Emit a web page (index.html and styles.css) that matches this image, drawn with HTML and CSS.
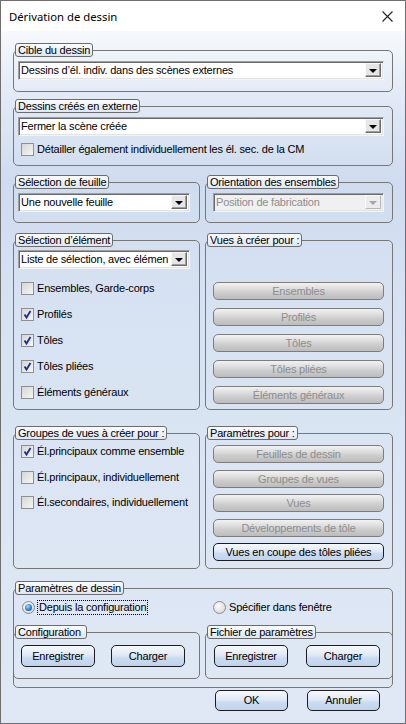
FILE: index.html
```html
<!DOCTYPE html>
<html lang="fr">
<head>
<meta charset="utf-8">
<title>Dérivation de dessin</title>
<link rel="stylesheet" href="styles.css">
</head>
<body>
<div class="window">
  <div class="titlebar">
    <span class="title">Dérivation de dessin</span>
    <svg class="close" width="11" height="11" viewBox="0 0 11 11"><path d="M0.5 0.5 L10.5 10.5 M10.5 0.5 L0.5 10.5" stroke="#222" stroke-width="1.1" fill="none"/></svg>
  </div>
  <div class="content">
    <fieldset class="grp g1">
      <legend>Cible du dessin</legend>
      <div class="body b1">
        <div class="combo"><span class="val">Dessins d’él. indiv. dans des scènes externes</span><span class="drop"><i></i></span></div>
      </div>
    </fieldset>

    <fieldset class="grp g2">
      <legend>Dessins créés en externe</legend>
      <div class="body b2">
        <div class="combo"><span class="val">Fermer la scène créée</span><span class="drop"><i></i></span></div>
        <label class="chk first"><span class="box"></span>Détailler également individuellement les él. sec. de la CM</label>
      </div>
    </fieldset>

    <div class="cols rowA">
      <fieldset class="grp">
        <legend>Sélection de feuille</legend>
        <div class="body bl">
          <div class="combo"><span class="val">Une nouvelle feuille</span><span class="drop"><i></i></span></div>
        </div>
      </fieldset>
      <fieldset class="grp">
        <legend>Orientation des ensembles</legend>
        <div class="body br">
          <div class="combo disabled"><span class="val">Position de fabrication</span><span class="drop"><i></i></span></div>
        </div>
      </fieldset>
    </div>

    <div class="cols rowB">
      <fieldset class="grp">
        <legend>Sélection d’élément</legend>
        <div class="body bl">
          <div class="combo"><span class="val">Liste de sélection, avec élémen</span><span class="drop"><i></i></span></div>
          <div class="checks c26">
            <label class="chk"><span class="box"></span>Ensembles, Garde-corps</label>
            <label class="chk"><span class="box on"><svg viewBox="0 0 11 11"><path d="M2.5 5.5 L4.5 8.5 L8.5 2" stroke="#1b2d94" stroke-width="1.8" fill="none"/></svg></span>Profilés</label>
            <label class="chk"><span class="box on"><svg viewBox="0 0 11 11"><path d="M2.5 5.5 L4.5 8.5 L8.5 2" stroke="#1b2d94" stroke-width="1.8" fill="none"/></svg></span>Tôles</label>
            <label class="chk"><span class="box on"><svg viewBox="0 0 11 11"><path d="M2.5 5.5 L4.5 8.5 L8.5 2" stroke="#1b2d94" stroke-width="1.8" fill="none"/></svg></span>Tôles pliées</label>
            <label class="chk"><span class="box"></span>Éléments généraux</label>
          </div>
        </div>
      </fieldset>
      <fieldset class="grp">
        <legend>Vues à créer pour :</legend>
        <div class="body br btns vues">
          <button class="btn dis">Ensembles</button>
          <button class="btn dis">Profilés</button>
          <button class="btn dis">Tôles</button>
          <button class="btn dis">Tôles pliées</button>
          <button class="btn dis">Éléments généraux</button>
        </div>
      </fieldset>
    </div>

    <div class="cols rowC">
      <fieldset class="grp">
        <legend>Groupes de vues à créer pour :</legend>
        <div class="body bl">
          <div class="checks c25">
            <label class="chk"><span class="box on"><svg viewBox="0 0 11 11"><path d="M2.5 5.5 L4.5 8.5 L8.5 2" stroke="#1b2d94" stroke-width="1.8" fill="none"/></svg></span>Él.principaux comme ensemble</label>
            <label class="chk"><span class="box"></span>Él.principaux, individuellement</label>
            <label class="chk"><span class="box"></span>Él.secondaires, individuellement</label>
          </div>
        </div>
      </fieldset>
      <fieldset class="grp">
        <legend>Paramètres pour :</legend>
        <div class="body br btns params-btns">
          <button class="btn dis">Feuilles de dessin</button>
          <button class="btn dis">Groupes de vues</button>
          <button class="btn dis">Vues</button>
          <button class="btn dis">Développements de tôle</button>
          <button class="btn">Vues en coupe des tôles pliées</button>
        </div>
      </fieldset>
    </div>

    <fieldset class="grp gparams">
      <legend>Paramètres de dessin</legend>
      <div class="radios">
        <label class="rad"><span class="dot on"></span><span class="focus">Depuis la configuration</span></label>
        <label class="rad r2"><span class="dot"></span><span>Spécifier dans fenêtre</span></label>
      </div>
      <div class="cols sub">
        <fieldset class="grp">
          <legend>Configuration&nbsp;</legend>
          <div class="body pair pl">
            <button class="btn big">Enregistrer</button>
            <button class="btn big">Charger</button>
          </div>
        </fieldset>
        <fieldset class="grp">
          <legend>Fichier de paramètres</legend>
          <div class="body pair pr">
            <button class="btn big">Enregistrer</button>
            <button class="btn big">Charger</button>
          </div>
        </fieldset>
      </div>
    </fieldset>

    <div class="footer">
      <button class="btn big">OK</button>
      <button class="btn big">Annuler</button>
    </div>
  </div>
</div>
</body>
</html>
```

FILE: styles.css
```css
* { box-sizing: border-box; }
html, body { margin: 0; padding: 0; }
body {
  width: 406px;
  height: 724px;
  font-family: "Liberation Sans", Arial, sans-serif;
  font-size: 11px;
  letter-spacing: -0.2px;
  color: #000;
  background: #fff;
  overflow: hidden;
}
.window {
  width: 406px;
  height: 724px;
  border: 1px solid #6f6f6f;
  display: flex;
  flex-direction: column;
}
.titlebar {
  height: 30px;
  flex: none;
  background: #fff;
  display: flex;
  align-items: center;
  justify-content: space-between;
  padding: 0 12px 0 8px;
}
.title {
  font-family: "Noto Sans", "Open Sans", sans-serif;
  font-size: 11.3px;
  letter-spacing: 0;
  color: #000;
}
.close { display: block; }
.content {
  flex: 1;
  padding: 12px 12px 0 12px;
  background: linear-gradient(#f6f9fd 0px, #e3ebf6 60px, #cfdcef 150px, #d6e2f2 260px, #dbe5f3 450px, #e0e8f5 693px);
}

/* group boxes */
.grp {
  margin: 0;
  padding: 0;
  min-width: 0;
  border: 1px solid #777;
  border-radius: 5px;
}
.grp > legend {
  margin-left: 1px;
  padding: 0 2px;
  height: 14px;
  line-height: 12px;
  border: 1px solid #6c6c6c;
  border-radius: 3px;
  background: linear-gradient(#fbfcfe, #dde7f4);
  white-space: nowrap;
}
.body { display: flex; flex-direction: column; }
.b1 { padding: 4px 8px 11px 4px; }
.g2 { margin-top: 7px; }
.b2 { padding: 4px 8px 9px 4px; }

.cols {
  display: grid;
  grid-template-columns: 187px 188px;
  column-gap: 5px;
  align-items: stretch;
}
.rowA { margin-top: 9px; }
.rowB { margin-top: 10px; }
.rowC { margin-top: 16px; }
.rowA .bl { padding: 4px 9px 10px 4px; }
.rowA .br { padding: 4px 8px 10px 7px; }
.rowB .bl { padding: 3px 9px 10px 4px; }
.rowC .bl { padding: 5px 9px 10px 4px; }
.btns { padding-left: 7px; padding-right: 8px; }
.vues { padding-top: 35px; padding-bottom: 5px; gap: 8px; }
.params-btns { padding-top: 5px; padding-bottom: 7px; gap: 6.5px; }

/* combo box */
.combo {
  height: 19px;
  display: flex;
  align-items: stretch;
  background: #fff;
  border: 1px solid;
  border-color: #a0a0a0 #f4f4f4 #f4f4f4 #a0a0a0;
  box-shadow: inset 1px 1px 0 #696969, inset -1px -1px 0 #e3e3e3;
  padding: 1px 2px 2px 1px;
}
.combo .val {
  flex: 1;
  min-width: 0;
  overflow: hidden;
  white-space: nowrap;
  line-height: 15px;
  padding-left: 1px;
}
.combo .drop {
  flex: none;
  width: 16px;
  background: #e6e6e6;
  border: 1px solid;
  border-color: #f8f8f8 #6a6a6a #6a6a6a #f8f8f8;
  box-shadow: inset -1px -1px 0 #a0a0a0;
  display: flex;
  align-items: center;
  justify-content: center;
}
.combo .drop i {
  display: block;
  width: 0; height: 0;
  border-left: 4px solid transparent;
  border-right: 4px solid transparent;
  border-top: 4px solid #000;
  margin-top: 1px;
}
.combo.disabled { background: #f0f0f0; color: #8d8d8d; }
.combo.disabled .drop { background: #ececec; border-color: #fafafa #b8b8b8 #b8b8b8 #fafafa; box-shadow: none; }
.combo.disabled .drop i { border-top-color: #a6a6a6; }

/* checkboxes */
.chk {
  display: flex;
  align-items: center;
  height: 13px;
  line-height: 13px;
  white-space: nowrap;
}
.chk .box {
  flex: none;
  width: 13px;
  height: 13px;
  margin: 0 3px 0 3px;
  border: 1px solid #8f8f8f;
  background: linear-gradient(135deg, #d6d6d6, #f6f6f6);
  display: flex;
  align-items: center;
  justify-content: center;
}
.chk .box svg { width: 11px; height: 11px; display: block; }
.chk.first { margin-top: 7px; }
.checks { display: flex; flex-direction: column; }
.c26 { margin-top: 13px; gap: 13px; }
.c25 { gap: 12.5px; }

/* buttons */
.btn {
  font-family: "Liberation Sans", Arial, sans-serif;
  font-size: 11px;
  letter-spacing: -0.2px;
  color: #000;
  height: 18px;
  padding: 0;
  border: 1px solid #1d1d1d;
  border-radius: 5px;
  background: linear-gradient(#f6f9fd, #e0e9f6 45%, #cbdcf1 60%, #bfd3ee);
  line-height: 16px;
  text-align: center;
  white-space: nowrap;
}
.btn.dis {
  color: #8d8d8d;
  border-color: #7d7d7d;
  background: linear-gradient(#f2f2f2, #dedede 35%, #cdcdcd 60%, #bcbcbc);
}
.btn.big { height: 22px; width: 74px; line-height: 20px; }

/* parameters */
.gparams { margin-top: 12px; padding-bottom: 8px; }
.radios {
  display: grid;
  grid-template-columns: 190px 170px;
  margin-top: 5px;
  padding-left: 8px;
}
.rad { display: flex; align-items: center; height: 14px; white-space: nowrap; }
.rad .dot {
  flex: none;
  width: 13px; height: 13px;
  border-radius: 50%;
  border: 1px solid #8c8c8c;
  background: radial-gradient(circle at 40% 35%, #fdfdfd, #cfcfcf);
  margin-right: 3px;
  display: flex; align-items: center; justify-content: center;
}
.rad .dot.on::after {
  content: "";
  width: 7px; height: 7px;
  border-radius: 50%;
  background: radial-gradient(circle at 40% 35%, #a6dcfa, #2a7fd0 55%, #0b3f8a);
}
.focus { outline: 1px dotted #000; outline-offset: 0; padding: 0 1px; line-height: 13px; }
.r2 { padding-left: 1px; }
.sub { margin: 11px -1px 0 -1px; }
.pair { flex-direction: row; padding-top: 6px; padding-bottom: 11px; }
.pl { padding-left: 7px; gap: 16px; }
.pr { padding-left: 8px; gap: 18px; }
.pair .btn.big { width: 74px; }

.footer {
  display: flex;
  justify-content: flex-end;
  gap: 19px;
  margin-top: 2px;
  padding-right: 13px;
}
.footer .btn.big { width: 73px; height: 21px; line-height: 19px; }
```
